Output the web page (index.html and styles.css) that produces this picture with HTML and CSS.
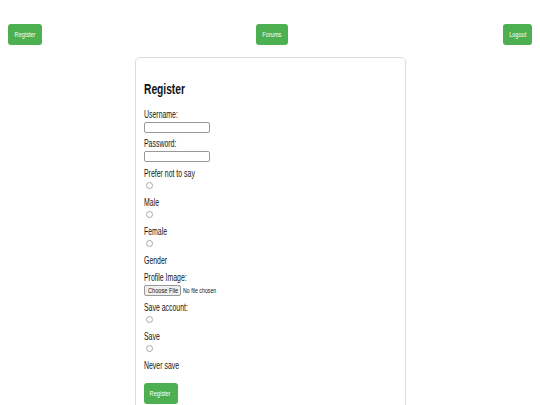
FILE: index.html
```html
<!DOCTYPE html>
<html>
<head>
<meta charset="utf-8">
<link rel="stylesheet" href="styles.css">
</head>
<body>
<nav class="topnav">
  <a class="btn" href="#"><span class="btxt">Register</span></a>
  <a class="btn" href="#"><span class="btxt">Forums</span></a>
  <a class="btn" href="#"><span class="btxt">Logout</span></a>
</nav>
<div class="card">
  <h2 class="title"><span class="sq">Register</span></h2>
  <form class="form">
    <label class="lbl"><span class="sq">Username:</span></label>
    <input class="txt" type="text">
    <label class="lbl"><span class="sq">Password:</span></label>
    <input class="txt last" type="password">
    <div class="opt"><span class="lbl"><span class="sq">Prefer not to say</span></span><input class="radio" type="radio" name="g"></div>
    <div class="opt"><span class="lbl"><span class="sq">Male</span></span><input class="radio" type="radio" name="g"></div>
    <div class="opt"><span class="lbl"><span class="sq">Female</span></span><input class="radio" type="radio" name="g"></div>
    <div class="opt"><span class="lbl"><span class="sq">Gender</span></span></div>
    <label class="lbl prof"><span class="sq">Profile Image:</span></label>
    <div class="file"><span class="filebtn"><span class="fsq">Choose File</span></span><span class="filetxt"><span class="fsq">No file chosen</span></span></div>
    <div class="opt"><span class="lbl"><span class="sq">Save account:</span></span><input class="radio" type="radio" name="s"></div>
    <div class="opt"><span class="lbl"><span class="sq">Save</span></span><input class="radio" type="radio" name="s"></div>
    <div class="opt"><span class="lbl"><span class="sq">Never save</span></span></div>
    <button class="btn submit" type="button"><span class="btxt">Register</span></button>
  </form>
</div>
</body>
</html>
```
FILE: styles.css
```css
body {
  margin: 8px;
  font-family: "Liberation Sans", Arial, sans-serif;
  color: #161616;
  background: #fff;
}
.topnav {
  display: flex;
  justify-content: space-between;
  margin-top: 16px;
}
.btn {
  display: inline-flex;
  align-items: center;
  justify-content: center;
  box-sizing: border-box;
  background: #4caf50;
  color: #fff;
  font-family: "Liberation Sans", Arial, sans-serif;
  font-size: 7px;
  height: 21px;
  padding: 0 4px;
  border-radius: 3px;
  text-decoration: none;
  border: none;
}
.btxt {
  display: inline-block;
  transform: scaleX(0.8);
  transform-origin: center;
}
.sq {
  display: inline-block;
  white-space: nowrap;
  transform: scaleX(0.63);
  transform-origin: left center;
}
.card {
  width: 253px;
  margin: 12px auto 0;
  border: 1px solid #dcdcdc;
  border-radius: 5px;
  padding: 0 8px 20px;
}
.title {
  font-size: 15.5px;
  font-weight: bold;
  margin: 22px 0 10px;
  line-height: 18px;
  color: #111;
}
.title .sq {
  transform: scaleX(0.66);
}
.form {
  display: flex;
  flex-direction: column;
  align-items: flex-start;
}
.lbl {
  display: block;
  font-size: 11px;
  line-height: 12px;
}
.txt {
  box-sizing: border-box;
  width: 66px;
  height: 11px;
  border: 1px solid #999;
  border-radius: 2px;
  padding: 0;
  margin: 2px 0 4px;
}
.txt.last {
  margin-bottom: 5px;
}
.opt {
  display: flex;
  flex-direction: column;
  align-items: flex-start;
}
.radio {
  appearance: none;
  -webkit-appearance: none;
  box-sizing: border-box;
  width: 7px;
  height: 7px;
  border: 1px solid #a8a8a8;
  border-radius: 50%;
  background: #fff;
  margin: 3px 0 7px 2px;
}
.prof {
  margin-top: 5px;
}
.file {
  display: flex;
  align-items: center;
  margin: 2px 0 5px;
  height: 11px;
}
.filebtn {
  box-sizing: border-box;
  display: inline-flex;
  align-items: center;
  width: 37px;
  height: 11px;
  padding-left: 3px;
  font-size: 7.5px;
  border: 1px solid #9a9a9a;
  border-radius: 2px;
  background: #efefef;
  overflow: hidden;
}
.filetxt {
  font-size: 7px;
  margin-left: 2px;
  width: 40px;
}
.fsq {
  display: inline-block;
  white-space: nowrap;
  transform: scaleX(0.75);
  transform-origin: left center;
}
.submit {
  margin-top: 12px;
  width: 34px;
  padding: 0;
}
```
